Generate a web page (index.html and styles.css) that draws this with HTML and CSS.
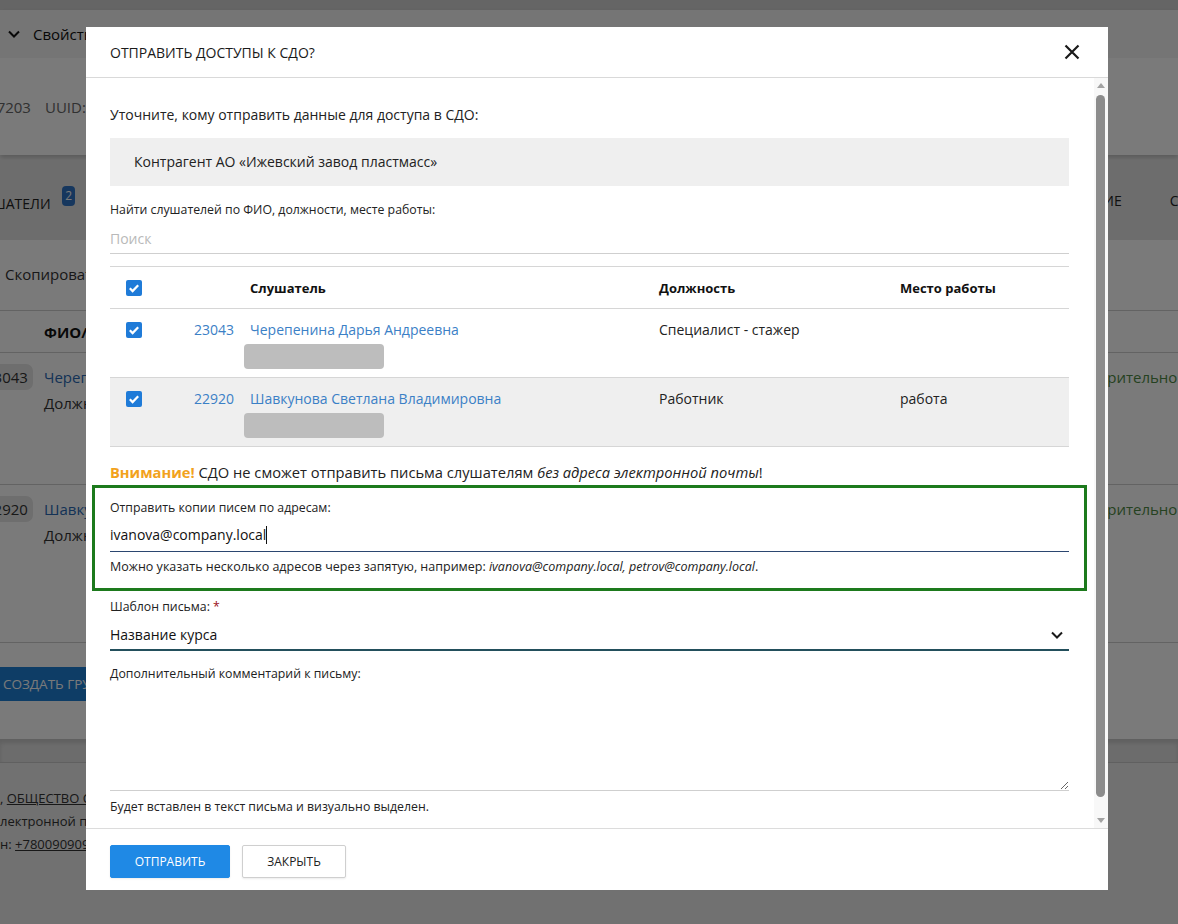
FILE: index.html
```html
<!DOCTYPE html>
<html lang="ru">
<head>
    <meta charset="UTF-8">
    <meta name="viewport" content="width=device-width, initial-scale=1.0">
    <title>Отправить доступы к СДО</title>
    <link rel="stylesheet" href="styles.css">
</head>
<body>
    <div class="page">
        <div class="page-top"></div>
        <div class="props">
            <div class="props-head">
                <svg class="chev" width="12" height="8" viewBox="0 0 12 8"><path d="M1 1.5l5 5 5-5" fill="none" stroke="#111" stroke-width="2"/></svg>
                <span>Свойства</span>
            </div>
            <div class="props-meta">
                <span class="meta-id">ID: 1157203</span>
                <span>UUID:</span>
            </div>
        </div>
        <div class="tabs">
            <span class="tab tab-first">СЛУШАТЕЛИ <span class="badge">2</span></span>
            <span class="tab-group">
                <span class="tab">ОФОРМЛЕНИЕ</span>
                <span class="tab">СТАТИСТИКА</span>
            </span>
        </div>
        <div class="listeners">
            <div class="toolbar">Скопировать ссылку</div>
            <div class="bg-row bg-head">
                <span></span>
                <span>ФИО/Должность</span>
                <span></span>
            </div>
            <div class="bg-row bg-row-1">
                <span><span class="pill">23043</span></span>
                <span><span class="bg-link">Черепенина Дарья Андреевна</span><br>Должность: Специалист - стажер</span>
                <span class="bg-status">Удовлетворительно</span>
            </div>
            <div class="bg-row bg-row-2">
                <span><span class="pill">22920</span></span>
                <span><span class="bg-link">Шавкунова Светлана Владимировна</span><br>Должность: Работник</span>
                <span class="bg-status">Удовлетворительно</span>
            </div>
            <div class="bg-actions"><span class="bg-btn">СОЗДАТЬ ГРУППУ</span></div>
        </div>
        <div class="strip"></div>
        <div class="page-foot">
            <p>, <u>ОБЩЕСТВО С ОГРАНИЧЕННОЙ ОТВЕТСТВЕННОСТЬЮ</u></p>
            <p>лектронной почты: info@company.local</p>
            <p>н: <u>+78009090929</u></p>
        </div>
    </div>

    <div class="overlay">
        <div class="modal">
            <div class="modal-head">
                <h2 class="modal-title">Отправить доступы к СДО?</h2>
                <svg class="close" width="16" height="16" viewBox="0 0 16 16"><path d="M1.5 1.5l13 13M14.5 1.5l-13 13" stroke="#1a1a1a" stroke-width="2.2" fill="none"/></svg>
            </div>

            <div class="modal-main">
                <div class="modal-body">
                    <p class="intro">Уточните, кому отправить данные для доступа в СДО:</p>
                    <div class="contractor">Контрагент АО «Ижевский завод пластмасс»</div>

                    <div class="label label-search">Найти слушателей по ФИО, должности, месте работы:</div>
                    <input class="search" type="text" placeholder="Поиск">

                    <table class="people">
                        <thead>
                            <tr>
                                <th class="c-check"><span class="check"><svg viewBox="0 0 16 16"><path d="M3.8 8.3l2.8 2.8 5.6-5.8" fill="none" stroke="#fff" stroke-width="2.2"/></svg></span></th>
                                <th class="c-id"></th>
                                <th class="c-name">Слушатель</th>
                                <th class="c-post">Должность</th>
                                <th>Место работы</th>
                            </tr>
                        </thead>
                        <tbody>
                            <tr>
                                <td class="c-check"><span class="check"><svg viewBox="0 0 16 16"><path d="M3.8 8.3l2.8 2.8 5.6-5.8" fill="none" stroke="#fff" stroke-width="2.2"/></svg></span></td>
                                <td class="c-id"><a href="#">23043</a></td>
                                <td class="c-name"><a href="#">Черепенина Дарья Андреевна</a><div class="redacted"></div></td>
                                <td class="c-post">Специалист - стажер</td>
                                <td></td>
                            </tr>
                            <tr class="alt">
                                <td class="c-check"><span class="check"><svg viewBox="0 0 16 16"><path d="M3.8 8.3l2.8 2.8 5.6-5.8" fill="none" stroke="#fff" stroke-width="2.2"/></svg></span></td>
                                <td class="c-id"><a href="#">22920</a></td>
                                <td class="c-name"><a href="#">Шавкунова Светлана Владимировна</a><div class="redacted"></div></td>
                                <td class="c-post">Работник</td>
                                <td>работа</td>
                            </tr>
                        </tbody>
                    </table>

                    <p class="warning"><b>Внимание!</b> СДО не сможет отправить письма слушателям <i>без адреса электронной почты</i>!</p>

                    <div class="copies">
                        <div class="label">Отправить копии писем по адресам:</div>
                        <div class="email">ivanova@company.local<span class="caret"></span></div>
                        <div class="hint">Можно указать несколько адресов через запятую, например: <i>ivanova@company.local, petrov@company.local</i>.</div>
                    </div>

                    <div class="label label-tpl">Шаблон письма: <span class="req">*</span></div>
                    <div class="select">
                        <span>Название курса</span>
                        <svg width="12" height="8" viewBox="0 0 12 8"><path d="M1 1.5l5 5 5-5" fill="none" stroke="#1a1a1a" stroke-width="2"/></svg>
                    </div>

                    <div class="label label-comment">Дополнительный комментарий к письму:</div>
                    <textarea class="comment"></textarea>
                    <div class="label hint-comment">Будет вставлен в текст письма и визуально выделен.</div>
                </div>
                <div class="scrollbar">
                    <span class="sb-up"></span>
                    <span class="sb-thumb"></span>
                    <span class="sb-down"></span>
                </div>
            </div>

            <div class="modal-foot">
                <button class="btn btn-primary">Отправить</button>
                <button class="btn btn-close">Закрыть</button>
            </div>
        </div>
    </div>
</body>
</html>
```

FILE: styles.css
```css
* {
    margin: 0;
    padding: 0;
    box-sizing: border-box;
}
html, body {
    height: 100%;
    overflow: hidden;
}
body {
    font-family: "Open Sans", "Noto Sans", sans-serif;
    font-size: 14px;
    color: #222;
    background: #ececec;
}

/* page under the dialog */
.page {
    font-size: 15px;
    color: #333;
}
.page-top {
    height: 10px;
    background: #d4d4d4;
}
.props {
    box-shadow: 0 3px 5px rgba(0, 0, 0, 0.2);
    margin-bottom: 5px;
}
.props-head {
    height: 48px;
    background: #f4f4f4;
    display: flex;
    align-items: center;
    gap: 13px;
    padding-left: 8px;
    color: #111;
}
.props-meta {
    height: 97px;
    background: #fff;
    display: flex;
    align-items: center;
    gap: 14px;
    color: #666;
}
.meta-id {
    margin-left: -52px;
}
.tabs {
    height: 80px;
    background: #e4e4e4;
    display: flex;
    align-items: center;
    justify-content: space-between;
    margin-right: -80px;
    font-size: 14px;
    color: #222;
}
.tab-first {
    margin-left: -36px;
    padding-bottom: 2px;
}
.badge {
    display: inline-block;
    background: #2f73c4;
    color: #fff;
    border-radius: 4px;
    font-size: 12px;
    width: 13px;
    height: 20px;
    line-height: 20px;
    text-align: center;
    vertical-align: 9px;
    margin-left: 8px;
}
.tab-group {
    display: flex;
    gap: 48px;
}
.listeners {
    background: #fff;
    height: 499px;
}
.toolbar {
    height: 70px;
    padding: 24px 0 0 5px;
}
.bg-row {
    display: grid;
    grid-template-columns: 44px 986px auto;
    border-top: 1px solid #d0d0d0;
    white-space: nowrap;
}
.bg-head {
    height: 42px;
    align-items: center;
    font-weight: 700;
    color: #111;
}
.bg-row-1 {
    height: 132px;
    padding-top: 11px;
    line-height: 26px;
}
.bg-row-2 {
    height: 159px;
    padding-top: 11px;
    line-height: 26px;
    border-bottom: 1px solid #d0d0d0;
}
.pill {
    display: inline-block;
    margin-left: -20px;
    background: #e6e6e6;
    border-radius: 7px;
    padding: 0 5px;
}
.bg-link {
    color: #2a6ab5;
}
.bg-status {
    color: #4f8a45;
}
.bg-actions {
    padding-top: 24px;
}
.bg-btn {
    display: inline-block;
    margin-left: -13px;
    background: #1e7fd6;
    color: #fff;
    height: 34px;
    line-height: 34px;
    padding: 0 16px;
    font-size: 13.5px;
}
.strip {
    height: 24px;
    background: #e2e2e2;
    box-shadow: inset 0 4px 4px rgba(0, 0, 0, 0.12);
    border-bottom: 1px solid #c8c8c8;
}
.page-foot {
    padding-top: 24px;
    font-size: 13px;
    line-height: 23px;
    white-space: nowrap;
}

/* dialog */
.overlay {
    position: fixed;
    inset: 0;
    background: rgba(0, 0, 0, 0.52);
    padding: 27px 0 0 86px;
}
.modal {
    width: 1022px;
    height: 863px;
    background: #fff;
    display: flex;
    flex-direction: column;
}
.modal-head {
    height: 51px;
    flex: none;
    display: flex;
    align-items: center;
    justify-content: space-between;
    padding: 0 28px 0 24px;
    border-bottom: 1px solid #d9d9d9;
}
.modal-title {
    font-size: 14px;
    font-weight: 400;
    text-transform: uppercase;
    color: #1a1a1a;
}
.modal-main {
    flex: 1;
    min-height: 0;
    display: flex;
}
.modal-body {
    flex: 1;
    overflow: hidden;
    padding: 26px 25px 30px 24px;
}

/* scroll track of the dialog body */
.scrollbar {
    width: 14px;
    flex: none;
    display: flex;
    flex-direction: column;
    align-items: center;
    padding: 5px 0;
    background: #f8f8f8;
}
.sb-up,
.sb-down {
    width: 0;
    height: 0;
    border-left: 4px solid transparent;
    border-right: 4px solid transparent;
}
.sb-up {
    border-bottom: 5px solid #a3a3a3;
}
.sb-down {
    margin-top: auto;
    border-top: 5px solid #a3a3a3;
}
.sb-thumb {
    width: 9px;
    height: 702px;
    margin-top: 7px;
    margin-right: 1px;
    border-radius: 5px;
    background: #8c8c8c;
}

.intro {
    line-height: 22px;
}
.contractor {
    margin-top: 12px;
    height: 48px;
    line-height: 48px;
    padding: 0 24px;
    background: #efefef;
}
.label {
    font-size: 12.3px;
    line-height: 18px;
}
.label-search {
    margin-top: 15px;
}
.search {
    display: block;
    width: 100%;
    height: 30px;
    margin-top: 5px;
    border: none;
    border-bottom: 1px solid #cfcfcf;
    font: inherit;
    color: #222;
    outline: none;
}
.search::placeholder {
    color: #b9b9b9;
}

.people {
    width: 100%;
    margin-top: 12px;
    border-collapse: collapse;
    border-top: 1px solid #d6d6d6;
    text-align: left;
}
.people tr {
    border-bottom: 1px solid #d6d6d6;
}
.people th {
    height: 42px;
    font-size: 13px;
    font-weight: 700;
    padding: 0 8px;
    line-height: 18px;
    color: #111;
}
.people td {
    padding: 12px 8px 8px;
    line-height: 18px;
    vertical-align: top;
}
.people .alt {
    background: #efefef;
}
.people a {
    color: #3b80c6;
    text-decoration: none;
}
.c-check {
    width: 60px;
}
.people .c-check {
    padding-left: 16px;
    padding-right: 0;
}
.people td.c-check {
    padding-top: 13px;
}
.c-id {
    width: 72px;
    text-align: right;
}
.c-name {
    width: 409px;
}
.c-post {
    width: 241px;
}
.check {
    display: block;
    width: 16px;
    height: 16px;
    border-radius: 2px;
    background: #1f7bd8;
}
.check svg {
    display: block;
    width: 16px;
    height: 16px;
}
.redacted {
    width: 140px;
    height: 25px;
    margin: 5px 0 0 -6px;
    border-radius: 4px;
    background: #bdbdbd;
}

.warning {
    margin-top: 14px;
    font-size: 14.7px;
    line-height: 22px;
}
.warning b {
    color: #f2a21c;
}
.copies {
    margin: 2px -18px 0;
    border: 3px solid #1d7a1d;
    padding: 11px 15px 12px;
}
.email {
    height: 31px;
    margin-top: 4px;
    padding-top: 4px;
    border-bottom: 1px solid #2b4670;
    font-size: 14px;
    line-height: 20px;
    color: #111;
}
.caret {
    display: inline-block;
    width: 1px;
    height: 18px;
    background: #111;
    vertical-align: -4px;
}
.hint {
    margin-top: 6px;
    font-size: 12.5px;
    line-height: 18px;
    color: #222;
}
.label-tpl {
    margin-top: 7px;
}
.req {
    color: #9b1020;
}
.select {
    height: 31px;
    margin-top: 4px;
    padding: 4px 6px 0 0;
    border-bottom: 2px solid #234f5c;
    display: flex;
    justify-content: space-between;
    font-size: 14px;
    line-height: 22px;
    color: #111;
}
.select svg {
    margin-top: 7px;
}
.label-comment {
    margin-top: 14px;
}
.comment {
    display: block;
    width: 100%;
    height: 104px;
    margin-top: 4px;
    border: none;
    border-bottom: 1px solid #cfcfcf;
    resize: vertical;
    font: inherit;
    outline: none;
}
.hint-comment {
    margin-top: 7px;
}

.modal-foot {
    flex: none;
    height: 62px;
    border-top: 1px solid #dcdcdc;
    padding: 16px 24px 0;
    display: flex;
    align-items: flex-start;
    gap: 12px;
}
.btn {
    height: 33px;
    font-family: inherit;
    font-size: 12px;
    text-transform: uppercase;
    color: #222;
    background: #fff;
    border: 1px solid #cfcfcf;
    border-radius: 2px;
    box-shadow: 0 1px 2px rgba(0, 0, 0, 0.08);
    cursor: pointer;
}
.btn-primary {
    width: 120px;
    background: #1f89e5;
    border-color: #1f89e5;
    color: #fff;
}
.btn-close {
    width: 104px;
}
```
